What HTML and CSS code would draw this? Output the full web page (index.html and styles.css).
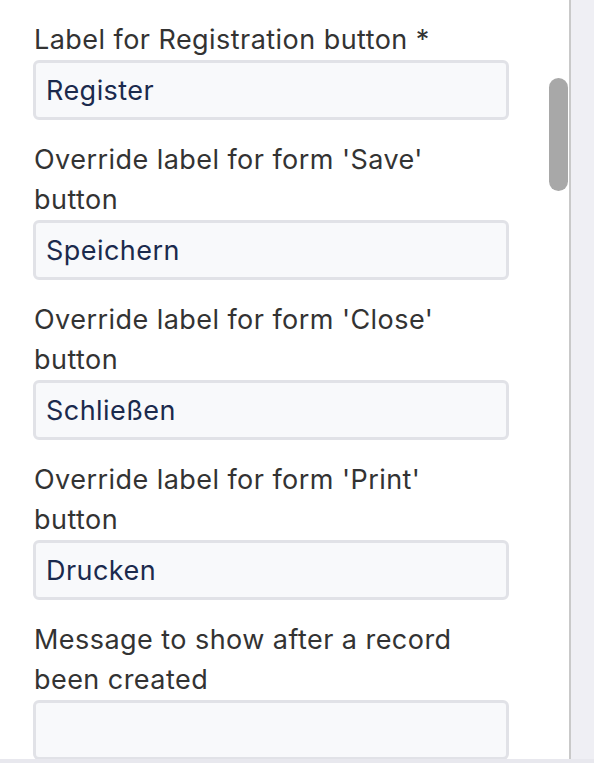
FILE: index.html
```html
<!DOCTYPE html>
<html lang="en">
<head>
<meta charset="utf-8">
<title>Form settings</title>
<link rel="stylesheet" href="styles.css">
</head>
<body>
<div class="frame">
  <div class="pane">
    <div class="form">
      <div class="field">
        <label class="label">Label for Registration button *</label>
        <input class="input" type="text" value="Register">
      </div>
      <div class="field">
        <label class="label">Override label for form 'Save' button</label>
        <input class="input" type="text" value="Speichern">
      </div>
      <div class="field">
        <label class="label">Override label for form 'Close' button</label>
        <input class="input" type="text" value="Schließen">
      </div>
      <div class="field">
        <label class="label">Override label for form 'Print' button</label>
        <input class="input" type="text" value="Drucken">
      </div>
      <div class="field">
        <label class="label">Message to show after a record been created</label>
        <input class="input" type="text" value="">
      </div>
    </div>
    <div class="thumb"></div>
  </div>
  <div class="track"></div>
</div>
<div class="bottom"></div>
</body>
</html>
```
FILE: styles.css
```css
html, body {
  margin: 0;
  padding: 0;
  background: #ffffff;
}
body {
  width: 594px;
  height: 784px;
  overflow: hidden;
  font-family: Inter, "Liberation Sans", sans-serif;
}
.frame {
  display: flex;
  height: 759px;
  overflow: hidden;
}
.pane {
  position: relative;
  width: 569px;
  flex: none;
  overflow: hidden;
}
.form {
  padding: 20px 0 0 33px;
  display: flex;
  flex-direction: column;
}
.field {
  display: flex;
  flex-direction: column;
  width: 476px;
  margin-bottom: 20px;
}
.label {
  font-size: 27px;
  letter-spacing: 0.45px;
  line-height: 40px;
  color: #333333;
  padding-left: 1px;
}
.input {
  box-sizing: border-box;
  width: 476px;
  height: 60px;
  margin: 0;
  border: 3px solid #e1e2e7;
  border-radius: 6px;
  background: #f8f9fb;
  padding: 0 10px;
  font-family: inherit;
  font-size: 27px;
  letter-spacing: 0.45px;
  color: #1b2a4d;
  outline: none;
}
.thumb {
  position: absolute;
  left: 549px;
  top: 78px;
  width: 19px;
  height: 113px;
  border-radius: 10px;
  background: #a8a8a8;
}
.track {
  flex: 1;
  border-left: 2px solid #c9c9c9;
  background: #efeff4;
}
.bottom {
  height: 4px;
  background: #e8e8ee;
}
```
